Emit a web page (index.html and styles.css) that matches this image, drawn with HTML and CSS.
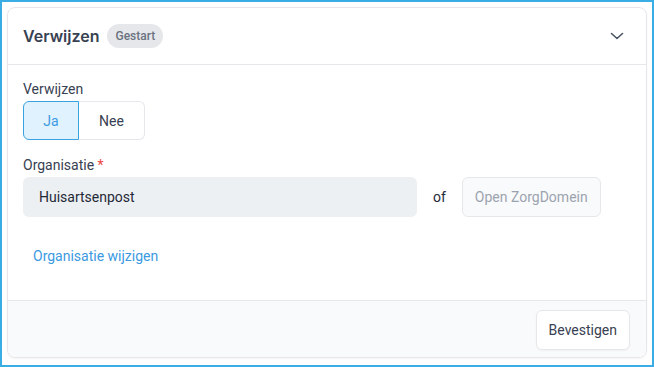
FILE: index.html
```html
<!DOCTYPE html>
<html lang="nl">
<head>
    <meta charset="UTF-8">
    <meta name="viewport" content="width=device-width, initial-scale=1.0">
    <title>Verwijzen</title>
    <link rel="stylesheet" href="styles.css">
</head>
<body>
<div class="frame">
    <section class="card">
        <header class="card__header">
            <h2 class="card__title">Verwijzen</h2>
            <span class="badge">Gestart</span>
            <svg class="card__chevron" width="16" height="16" viewBox="0 0 16 16" fill="none">
                <path d="M2.5 5.5L8 10.5L13.5 5.5" stroke="#4b5563" stroke-width="1.6" stroke-linecap="round" stroke-linejoin="round"/>
            </svg>
        </header>
        <div class="card__body">
            <div class="field">
                <span class="field__label">Verwijzen</span>
                <div class="toggle">
                    <button class="toggle__item toggle__item_active">Ja</button>
                    <button class="toggle__item">Nee</button>
                </div>
            </div>
            <div class="field">
                <span class="field__label">Organisatie <span class="field__required">*</span></span>
                <div class="org">
                    <div class="org__input">Huisartsenpost</div>
                    <span class="org__or">of</span>
                    <button class="btn btn_disabled">Open ZorgDomein</button>
                </div>
            </div>
            <a class="link" href="#">Organisatie wijzigen</a>
        </div>
        <footer class="card__footer">
            <button class="btn">Bevestigen</button>
        </footer>
    </section>
</div>
</body>
</html>
```

FILE: styles.css
```css
* {
    box-sizing: border-box;
}
body {
    margin: 0;
    font-family: Roboto, "Noto Sans", sans-serif;
    line-height: 20px;
    color: #374151;
}
.frame {
    width: 654px;
    height: 367px;
    border: 2px solid #3aaee4;
    padding: 5px 5px 7px 5px;
}
.card {
    display: flex;
    flex-direction: column;
    height: 351px;
    border: 1px solid #e5e7eb;
    border-radius: 8px;
    overflow: hidden;
    box-shadow: 0 1px 2px rgba(0, 0, 0, 0.05);
}
.card__header {
    display: flex;
    align-items: center;
    gap: 8px;
    height: 57px;
    padding: 0 21px 0 15px;
    border-bottom: 1px solid #e5e7eb;
}
.card__title {
    margin: 0;
    font-family: Inter, Roboto, sans-serif;
    font-size: 16px;
    font-weight: 600;
    color: #374151;
}
.badge {
    padding: 2px 8px;
    border-radius: 12px;
    background: #e5e7eb;
    color: #6b7280;
    font-size: 12px;
    font-weight: 500;
}
.card__chevron {
    margin-left: auto;
}
.card__body {
    flex: 1;
    display: flex;
    flex-direction: column;
    align-items: flex-start;
    padding: 14px 15px 0 15px;
}
.field {
    display: flex;
    flex-direction: column;
    gap: 2px;
    margin-bottom: 15px;
}
.field__label {
    font-size: 14px;
    color: #374151;
}
.field__required {
    color: #ef4444;
}
.toggle {
    display: flex;
}
.toggle__item {
    height: 39px;
    padding: 0;
    border: 1px solid #e5e7eb;
    background: #fff;
    font: inherit;
    font-size: 14px;
    color: #374151;
}
.toggle__item:first-child {
    width: 56px;
    border-radius: 6px 0 0 6px;
}
.toggle__item:last-child {
    width: 66px;
    border-left: none;
    border-radius: 0 6px 6px 0;
}
.toggle__item_active {
    background: #e0f2fe;
    border-color: #38a3e0;
    color: #3b9ae1;
}
.org {
    display: flex;
    align-items: center;
}
.org__input {
    display: flex;
    align-items: center;
    width: 394px;
    height: 40px;
    padding: 0 16px;
    border-radius: 6px;
    background: #edf0f3;
    font-size: 14px;
    color: #1f2937;
}
.org__or {
    margin: 0 16px;
    font-size: 14px;
    color: #1f2937;
}
.btn {
    height: 40px;
    padding: 0 12px;
    border: 1px solid #e5e7eb;
    border-radius: 6px;
    background: #fff;
    font: inherit;
    font-size: 14px;
    color: #374151;
    box-shadow: 0 1px 2px rgba(0, 0, 0, 0.04);
}
.btn_disabled {
    background: #f9fafb;
    color: #9ca3af;
    box-shadow: none;
}
.link {
    margin: 14px 0 0 10px;
    font-size: 14px;
    color: #3b9ae1;
    text-decoration: none;
}
.card__footer {
    display: flex;
    justify-content: flex-end;
    height: 57px;
    padding: 9px 16px 0 0;
    border-top: 1px solid #e5e7eb;
    background: #f9fafb;
}
```
